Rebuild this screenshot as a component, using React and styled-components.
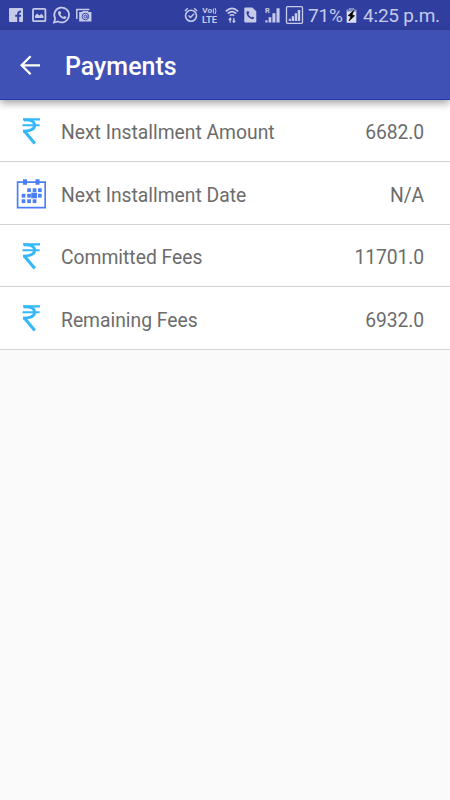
import React from 'react';
import styled, { createGlobalStyle } from 'styled-components';

const GlobalStyle = createGlobalStyle`
  * {
    box-sizing: border-box;
  }

  body {
    margin: 0;
    background: #fafafa;
    font-family: Roboto, "Liberation Sans", sans-serif;
  }
`;

const Screen = styled.div`
  display: flex;
  flex-direction: column;
  width: 450px;
  height: 800px;
  background: #fafafa;
  overflow: hidden;
`;

const StatusBar = styled.div`
  display: flex;
  align-items: center;
  height: 30px;
  padding: 0 10px 0 8px;
  background: #303f9f;
  color: #c5cae9;
`;

const StatusIcon = styled.svg`
  flex: none;
  width: ${(props) => props.$width}px;
  height: 20px;
  margin-right: ${(props) => props.$gap}px;
  overflow: visible;
`;

const Spacer = styled.div`
  flex: 1;
`;

const StatusText = styled.span`
  flex: none;
  width: ${(props) => props.$width}px;
  margin-right: ${(props) => props.$gap || 0}px;
  padding-top: 2px;
  font-size: 19px;
  line-height: 28px;
  letter-spacing: ${(props) => props.$spacing || 0}px;
  white-space: nowrap;
`;

const Toolbar = styled.header`
  display: flex;
  align-items: center;
  height: 70px;
  padding: 2px 20px 0;
  background: #3f51b5;
  border-bottom: 1px solid #1f3bad;
  box-shadow: 0 3px 8px rgba(0, 0, 0, 0.38);
  z-index: 1;
`;

const BackButton = styled.button`
  display: flex;
  width: 45px;
  padding: 0;
  border: 0;
  background: none;
`;

const Title = styled.h1`
  margin: 2px 0 0;
  color: #fff;
  font-size: 25px;
  font-weight: 500;
  line-height: 30px;
`;

const List = styled.div`
  display: flex;
  flex-direction: column;
`;

const RowIcon = styled.div`
  display: flex;
  width: 45px;
  padding-top: 1px;
`;

const Label = styled.span`
  flex: 1;
  padding-top: 2px;
`;

const Value = styled.span`
  padding-top: 2px;
  text-align: right;
  letter-spacing: -0.1px;
`;

const Row = styled.div`
  display: flex;
  align-items: center;
  height: 62.5px;
  padding: 2px 26px 0 16px;
  background: #fff;
  border-bottom: 1px solid #d2d2d2;
  color: #6c6c6c;
  font-size: 19.3px;

  &:first-child {
    height: 62px;
  }

  &:nth-child(even) ${Label}, &:nth-child(even) ${Value} {
    padding-top: 3.5px;
  }
`;

const RupeeIcon = () => (
  <svg width="30" height="30" viewBox="0 0 30 30" fill="none" stroke="#35b8fb">
    <path d="M7 2.4H24M6.5 8.2H23.6" strokeWidth="2.1" />
    <path d="M8 3C15 2.4 18.6 4.5 18.6 8.2C18.6 11.9 15.5 14 7 14.1" strokeWidth="2.9" />
    <path d="M8.1 13.8L18.8 26.4" strokeWidth="3.1" />
  </svg>
);

const dots = [
  [11.5, 10], [17, 10], [22.3, 10],
  [6, 15.5], [11.5, 15.5], [22.3, 15.5],
  [6, 21], [11.5, 21], [17, 21],
];

const CalendarIcon = () => (
  <svg width="30" height="30" viewBox="0 0 30 30" fill="#4b7ff7">
    <path d="M1.6 3.2H29.2V28.7H1.6Z" fill="none" stroke="#4b7ff7" strokeWidth="1.7" />
    <path d="M7 .2h4v5.6h-4zM19.5 .2h4v5.6h-4z" />
    {dots.map(([x, y]) => (
      <rect key={`${x}-${y}`} x={x - 0.3} y={y - 0.7} width="3.7" height="3.8" />
    ))}
    <rect x="15.2" y="13.7" width="5.8" height="5.6" />
  </svg>
);

const StatusIcons = () => (
  <>
    <StatusIcon $width={15} $gap={9} viewBox="0 0 15 20">
      <rect x="1" y="3" width="14" height="14" rx="1" fill="#c5cae9" />
      <path d="M10.2 17V8.7Q10.2 6.5 13 6.6M7.2 10.8H13" fill="none" stroke="#303f9f" strokeWidth="2" />
    </StatusIcon>
    <StatusIcon $width={15} $gap={6} viewBox="0 0 15 20">
      <rect x="1" y="3.8" width="12.4" height="12.4" rx="1" fill="none" stroke="#c5cae9" strokeWidth="1.8" />
      <path d="M3 13V10.7L5.2 8.6L7.4 10.5L9.5 8.8L11.4 11V13Z" fill="#c5cae9" />
    </StatusIcon>
    <StatusIcon $width={18} $gap={5} viewBox="0 0 18 20">
      <path d="M1 17.6L2.2 13.6A7.4 7.4 0 1 1 5 16.4Z" fill="none" stroke="#c5cae9" strokeWidth="1.7" />
      <path d="M5.8 6.2L7.2 6L8.2 8.2L7.3 9.4Q8.3 11.2 10.2 12L11.3 10.9L13.5 12Q13.3 14 11.4 14Q6 13 5 8.2Q5 6.8 5.8 6.2Z" fill="#c5cae9" />
    </StatusIcon>
    <StatusIcon $width={16} $gap={0} viewBox="0 0 16 20">
      <path d="M.8 14V4.4H13.4" fill="none" stroke="#c5cae9" strokeWidth="1.5" />
      <path d="M3.2 7H6L7 6H11.5L12.5 7H15.4V16.6H3.2Z" fill="#c5cae9" />
      <circle cx="9.4" cy="11.5" r="3.3" fill="none" stroke="#303f9f" strokeWidth="0.9" />
      <circle cx="9.4" cy="11.5" r="1.3" fill="none" stroke="#303f9f" strokeWidth="0.9" />
      <path d="M10.9 10.2V12.4L12.3 12.3" fill="none" stroke="#303f9f" strokeWidth="0.7" />
    </StatusIcon>
    <Spacer />
    <StatusIcon $width={14} $gap={4} viewBox="0 0 14 20" fill="none" stroke="#c5cae9">
      <circle cx="7" cy="10.8" r="5.5" strokeWidth="1.6" />
      <path d="M.9 6L3.8 3.3M13.1 6L10.2 3.3" strokeWidth="1.4" />
      <path d="M4.5 10.5L6.5 12.5L10 8.8" strokeWidth="1.4" />
    </StatusIcon>
    <StatusIcon $width={16} $gap={7} viewBox="0 0 16 20" fill="#c5cae9" fontFamily="Roboto, sans-serif" fontWeight="700">
      <text x="0.3" y="8.4" fontSize="7" textLength="9.8" lengthAdjust="spacingAndGlyphs">Vo</text>
      <path d="M11.4 3.6V8.4M13 3Q15 6 13 9" fill="none" stroke="#c5cae9" />
      <text x="0" y="17.9" fontSize="8.7" textLength="15" lengthAdjust="spacingAndGlyphs">LTE</text>
    </StatusIcon>
    <StatusIcon $width={14} $gap={5} viewBox="0 0 14 20" fill="none" stroke="#c5cae9">
      <path d="M.8 6.3Q7 .5 13.2 6.3" strokeWidth="1.7" />
      <path d="M2.8 8.7Q7 4.7 11.2 8.7" strokeWidth="1.6" />
      <path d="M4.8 10.8Q7 8.7 9.2 10.8" strokeWidth="1.5" />
      <path d="M5.2 13.3V17.5M3.7 14.9L5.2 13.3L6.3 14.6M8.8 13V17.2M7.7 15.7L8.8 17.2L10.3 15.7" strokeWidth="1.3" />
    </StatusIcon>
    <StatusIcon $width={13} $gap={8} viewBox="0 0 13 20">
      <path d="M1.3 2.5H8.3L12.3 6.3V16.3Q12.3 17.5 11 17.5H1.5Q.3 17.5 .3 16.3V3.6Q.3 2.5 1.3 2.5Z" fill="#c5cae9" />
      <path d="M3 6.3L4.4 6L5.3 8.1L4.3 9.3Q5.3 11.4 7.4 12.4L8.5 11.5L10.2 12.8Q9.8 14.2 8.5 14.2Q3.8 13.2 2.5 8.5Q2.3 7 3 6.3Z" fill="#303f9f" />
    </StatusIcon>
    <StatusIcon $width={15} $gap={6} viewBox="0 0 15 20" fill="#c5cae9">
      <text x="0" y="8.2" fontSize="7.5" fontWeight="700" fontFamily="Roboto, sans-serif">R</text>
      <path d="M.3 15.3H2.5V17.5H.3ZM3.6 12.3H6.3V17.5H3.6ZM7.4 8.3H10.4V17.5H7.4ZM11.5 3.2H14.6V17.5H11.5Z" />
    </StatusIcon>
    <StatusIcon $width={17} $gap={5} viewBox="0 0 17 20" fill="#c5cae9">
      <rect x=".5" y="1.7" width="16" height="16.6" rx="1" fill="none" stroke="#c5cae9" strokeWidth="1.3" />
      <path d="M2.8 13.8H4.9V16H2.8ZM5.7 11.3H8V16H5.7ZM8.7 8.3H11V16H8.7ZM11.7 5H14.2V16H11.7Z" />
    </StatusIcon>
    <StatusText $width={35} $gap={3} $spacing={-0.2}>71%</StatusText>
    <StatusIcon $width={11} $gap={6} viewBox="0 0 11 20">
      <path d="M3.3 3H7.7V4.7H10.3V17.7H.7V4.7H3.3Z" fill="#dde0f1" />
      <path d="M3.3 3H7.7V4.7H10.3V6.5H.7V4.7H3.3Z" fill="#7e87c3" />
      <path d="M7.7 5.6L2.2 10.5L5 11.5L3 16L8.5 10.8L6 9.8Z" fill="#050505" stroke="#050505" strokeWidth=".7" />
    </StatusIcon>
    <StatusText $width={77} $spacing={-0.2}>4:25 p.m.</StatusText>
  </>
);

const App = () => {
  const data = [
    { label: 'Next Installment Amount', value: '6682.0', icon: <RupeeIcon /> },
    { label: 'Next Installment Date', value: 'N/A', icon: <CalendarIcon /> },
    { label: 'Committed Fees', value: '11701.0', icon: <RupeeIcon /> },
    { label: 'Remaining Fees', value: '6932.0', icon: <RupeeIcon /> },
  ];

  return (
    <Screen>
      <GlobalStyle />
      <StatusBar>
        <StatusIcons />
      </StatusBar>
      <Toolbar>
        <BackButton aria-label="Back">
          <svg width="21" height="22" viewBox="0 0 21 22" fill="none" stroke="#fff" strokeWidth="2.3">
            <path d="M20 10.3H1.8M10.6 1.3L1.6 10.3L10.6 19.3" />
          </svg>
        </BackButton>
        <Title>Payments</Title>
      </Toolbar>
      <List>
        {data.map((item) => (
          <Row key={item.label}>
            <RowIcon>{item.icon}</RowIcon>
            <Label>{item.label}</Label>
            <Value>{item.value}</Value>
          </Row>
        ))}
      </List>
    </Screen>
  );
};

export default App;
